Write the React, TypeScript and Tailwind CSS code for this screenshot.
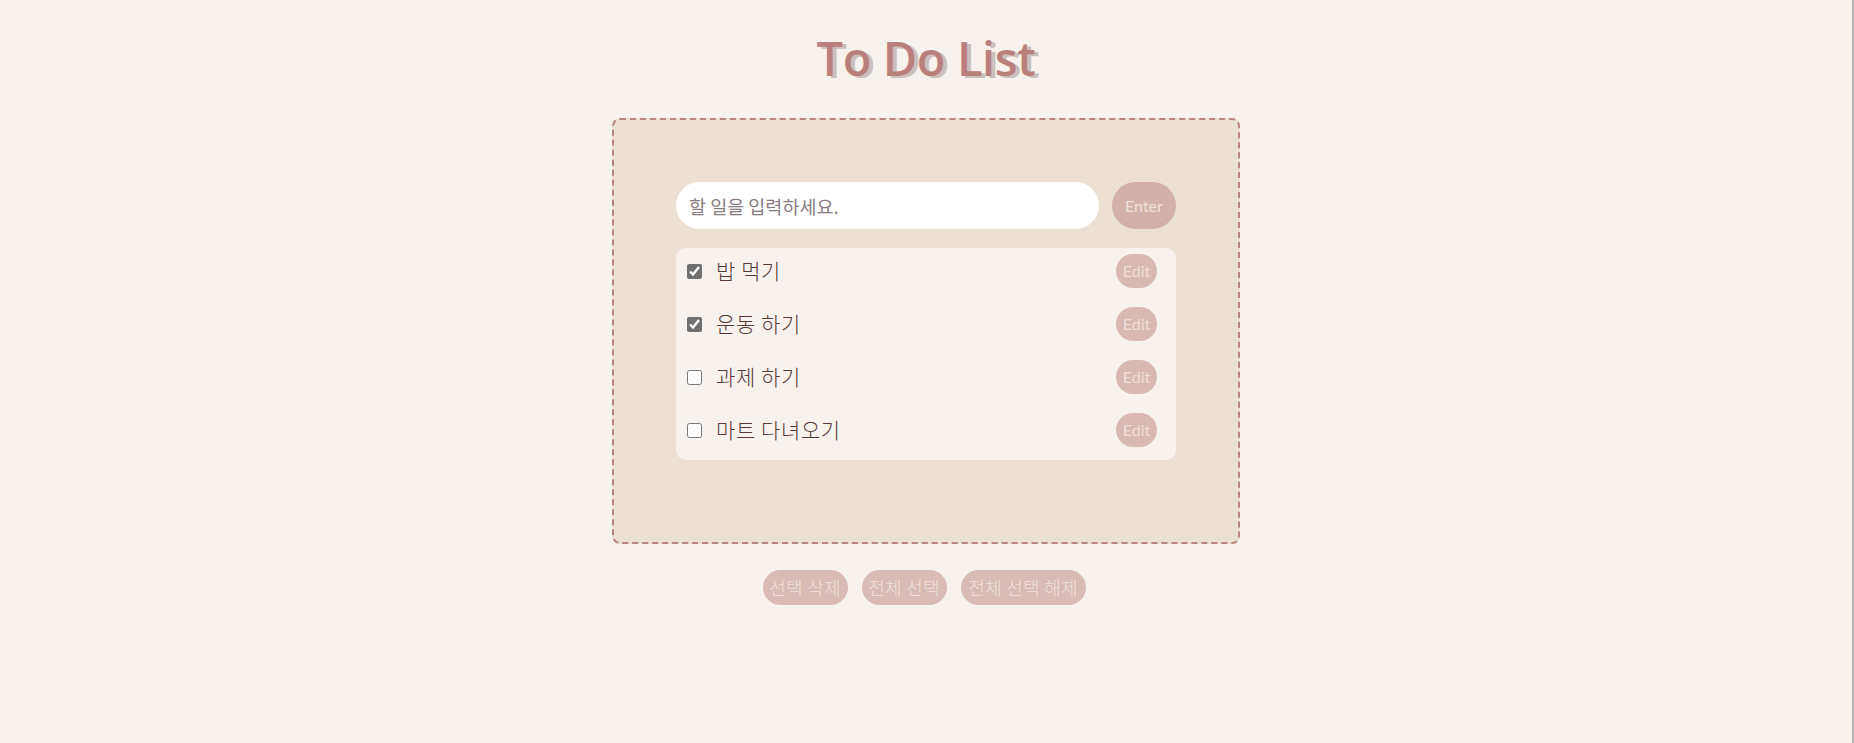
import React, { useState } from "react";

const items = [
  { text: "밥 먹기", done: true },
  { text: "운동 하기", done: true },
  { text: "과제 하기", done: false },
  { text: "마트 다녀오기", done: false },
];

export default function App() {
  const [todos, setTodos] = useState(items);
  const font = { fontFamily: '"Lato", "Noto Sans CJK KR", sans-serif' };
  return (
    <div
      className="w-full h-[743px] bg-[#f7f2ed] border-r-2 border-[#b4b4b4] flex flex-col items-center pt-[27px]"
      style={font}
    >
      <h1
        className="text-[47px] font-semibold leading-[63px] text-[#b97f7c] tracking-[-0.4px] [text-shadow:4px_2px_0_#cbbfbb]"
        style={{ fontFamily: '"Open Sans", sans-serif' }}
      >
        To Do List
      </h1>
      <div className="mt-[28px] w-[628px] h-[426px] bg-[#ece0d4] border-2 border-dashed border-[#b9837f] rounded-[8px] pt-[62px] px-[62px]">
        <div className="flex items-center gap-[13px]">
          <input
            className="flex-1 h-[47px] rounded-full bg-white pl-[13px] text-[18.5px] outline-none text-[#5e3c3c] placeholder:text-[#877c80]"
            style={{ fontFamily: '"Noto Sans CJK KR", sans-serif' }}
            placeholder="할 일을 입력하세요."
          />
          <button className="w-[64px] h-[47px] rounded-full bg-[#d3b1a9] text-[#f0e1d9] text-[16px]">
            Enter
          </button>
        </div>
        <ul className="mt-[19px] bg-[#f7f2ee] rounded-[10px] pt-[6px] pb-[13px] pl-[11px] pr-[19px] flex flex-col gap-[19px]">
          {todos.map((t, i) => (
            <li key={i} className="h-[34px] flex items-center">
              <input
                type="checkbox"
                checked={t.done}
                onChange={() =>
                  setTodos(todos.map((x, j) => (j === i ? { ...x, done: !x.done } : x)))
                }
                className="w-[15px] h-[15px] m-0 accent-[#707070]"
              />
              <span
                className="ml-[14px] flex-1 text-[21px] font-light tracking-[0.6px] text-[#5a3838]"
                style={{ fontFamily: '"Noto Sans CJK KR", sans-serif' }}
              >
                {t.text}
              </span>
              <button className="w-[41px] h-[34px] rounded-full bg-[#d9b8b4] text-[#efdfd9] text-[16px] px-0">
                Edit
              </button>
            </li>
          ))}
        </ul>
      </div>
      <div
        className="mt-[26px] flex gap-[14px] mr-[4px]"
        style={{ fontFamily: '"Noto Sans CJK KR", sans-serif' }}
      >
        <button className="h-[35px] w-[85px] rounded-full bg-[#d9bab6] text-[#f1e2dd] text-[18px] font-light tracking-[0.3px]">
          선택 삭제
        </button>
        <button className="h-[35px] w-[85px] rounded-full bg-[#d9bab6] text-[#f1e2dd] text-[18px] font-light tracking-[0.3px]">
          전체 선택
        </button>
        <button className="h-[35px] w-[125px] rounded-full bg-[#d9bab6] text-[#f1e2dd] text-[18px] font-light tracking-[0.3px]">
          전체 선택 해제
        </button>
      </div>
    </div>
  );
}
